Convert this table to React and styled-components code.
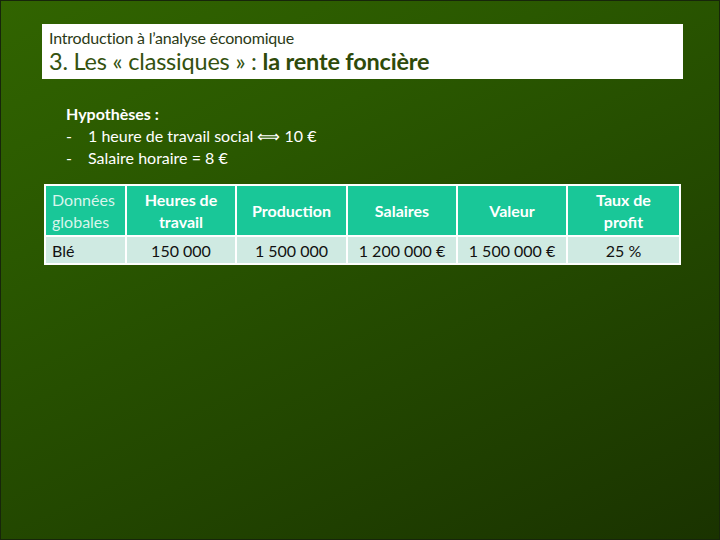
import styled, { createGlobalStyle } from "styled-components"

const GlobalStyle = createGlobalStyle`
  html, body {
    margin: 0;
    padding: 0;
  }
  body {
    font-family: Lato, "Open Sans", sans-serif;
  }
`;

const headers = [
  { label: "Données globales", plain: true, width: 81 },
  { label: "Heures de travail", width: 110 },
  { label: "Production", width: 111 },
  { label: "Salaires", width: 110 },
  { label: "Valeur", width: 110 },
  { label: "Taux de profit", width: 113 },
];

const row = ["Blé", "150 000", "1 500 000", "1 200 000 €", "1 500 000 €", "25 %"];

export default function App() {
  return (
    <>
      <GlobalStyle />
      <Slide>
        <TitleBox>
          <Kicker>Introduction à l’analyse économique</Kicker>
          <Title>
            3. Les « classiques » : <strong>la rente foncière</strong>
          </Title>
        </TitleBox>

        {/* Hypotheses */}
        <Hypotheses>
          <Heading>Hypothèses :</Heading>
          <Item>
            <Dash>-</Dash>1 heure de travail social ⟺ 10 €
          </Item>
          <Item>
            <Dash>-</Dash>Salaire horaire = 8 €
          </Item>
        </Hypotheses>

        {/* Data table */}
        <Table>
          <colgroup>
            {headers.map((h) => (
              <col key={h.label} style={{ width: h.width }} />
            ))}
          </colgroup>
          <thead>
            <tr>
              {headers.map((h) => (
                <Th key={h.label} $plain={h.plain}>
                  {h.label}
                </Th>
              ))}
            </tr>
          </thead>
          <tbody>
            <tr>
              {row.map((v, i) => (
                <Td key={i} $left={i === 0}>
                  {v}
                </Td>
              ))}
            </tr>
          </tbody>
        </Table>
      </Slide>
    </>
  )
}

const Slide = styled.div`
  width: 720px;
  height: 540px;
  box-sizing: border-box;
  border: 1px solid #17260a;
  background: linear-gradient(155deg, #316400 0%, #2a5800 30%, #224600 65%, #1a3300 100%);
  padding: 23px 36px 0 41px;
  display: flex;
  flex-direction: column;
  overflow: hidden;
`;

const TitleBox = styled.div`
  background: #ffffff;
  height: 55px;
  box-sizing: border-box;
  padding: 4px 7px 0;
  display: flex;
  flex-direction: column;
`;

const Kicker = styled.div`
  font-size: 16px;
  line-height: 19px;
  color: #2b3a16;
  letter-spacing: -0.2px;
`;

const Title = styled.div`
  font-size: 23.5px;
  line-height: 29px;
  color: #34520f;
  letter-spacing: -0.2px;

  strong {
    font-weight: 700;
    color: #2e4a0a;
  }
`;

const Hypotheses = styled.div`
  margin: 24px 0 0 24px;
  color: #ffffff;
  font-size: 16px;
  line-height: 22px;
`;

const Heading = styled.div`
  font-weight: 700;
`;

const Item = styled.div`
  display: flex;
`;

const Dash = styled.span`
  width: 22px;
`;

const Table = styled.table`
  margin: 15px 0 0 2px;
  width: 637px;
  table-layout: fixed;
  border-collapse: collapse;
  border: 2px solid #ffffff;
  font-size: 16px;
`;

const Th = styled.th`
  background: #19c798;
  border: 2px solid #ffffff;
  height: 49px;
  padding: 0 ${(p) => (p.$plain ? "6px" : "12px")};
  line-height: 22px;
  color: ${(p) => (p.$plain ? "#d8f5ec" : "#ffffff")};
  font-weight: ${(p) => (p.$plain ? 400 : 700)};
  text-align: ${(p) => (p.$plain ? "left" : "center")};
`;

const Td = styled.td`
  background: #cfeae2;
  border: 2px solid #ffffff;
  height: 26px;
  padding: 0 6px;
  color: #111111;
  text-align: ${(p) => (p.$left ? "left" : "center")};
`;
